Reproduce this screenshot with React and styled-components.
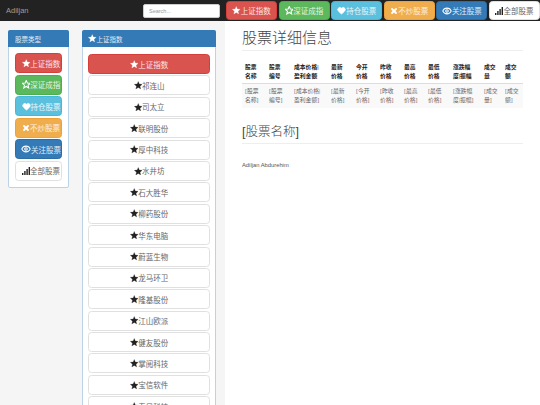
import React from "react";
import styled, { createGlobalStyle } from "styled-components";
import { Heart, X, Eye } from "lucide-react";

const GlobalStyle = createGlobalStyle`
  html, body {
    margin: 0;
    height: 405px;
    overflow: hidden;
    background: #fff;
    font-family: "Liberation Sans", "Noto Sans CJK SC", sans-serif;
    color: #333;
  }
`;

const colors = {
  red: ["#d9534f", "#d43f3a", "#fbe6e5"],
  green: ["#5cb85c", "#4cae4c", "#e6f5e6"],
  cyan: ["#5bc0de", "#46b8da", "#e6f6fb"],
  orange: ["#f0ad4e", "#eea236", "#fdf1e0"],
  blue: ["#337ab7", "#2e6da4", "#e0ebf5"],
  white: ["#fff", "#e0e0e0", "#666"],
};

function StarIcon({ empty }) {
  return (
    <svg width="8.5" height="8.5" viewBox="0 0 20 20">
      <polygon
        points="10,1 12.6,7.2 19.4,7.7 14.2,12.1 15.8,18.8 10,15.2 4.2,18.8 5.8,12.1 0.6,7.7 7.4,7.2"
        fill={empty ? "none" : "currentColor"}
        stroke="currentColor"
        strokeWidth={empty ? 2.4 : 0.5}
      />
    </svg>
  );
}

function SignalIcon() {
  return (
    <svg width="8" height="8" viewBox="0 0 8 8" fill="currentColor">
      <rect x="0" y="6" width="1.4" height="2" />
      <rect x="2.2" y="4" width="1.4" height="4" />
      <rect x="4.4" y="2" width="1.4" height="6" />
      <rect x="6.6" y="0" width="1.4" height="8" />
    </svg>
  );
}

const icons = {
  star: <StarIcon />,
  starEmpty: <StarIcon empty />,
  heart: <Heart size={9} fill="currentColor" strokeWidth={2} />,
  remove: <X size={8} strokeWidth={5.5} />,
  eye: <Eye size={10} strokeWidth={2.6} />,
  signal: <SignalIcon />,
};

const types = [
  { label: "上证指数", icon: "star", color: "red" },
  { label: "深证成指", icon: "starEmpty", color: "green" },
  { label: "持仓股票", icon: "heart", color: "cyan" },
  { label: "不炒股票", icon: "remove", color: "orange" },
  { label: "关注股票", icon: "eye", color: "blue" },
  { label: "全部股票", icon: "signal", color: "white" },
];

const stocks = [
  "祁连山", "司太立", "联明股份", "厚中科技", "水井坊", "石大胜华", "柳药股份",
  "华东电脑", "蔚蓝生物", "龙马环卫", "隆基股份", "江山欧派", "健友股份",
  "掌阅科技", "宝信软件", "春风科技",
];

const columns = [
  { w: 24, head: ["股票", "名称"], cell: ["[股票", "名称]"] },
  { w: 25, head: ["股票", "编号"], cell: ["[股票", "编号]"] },
  { w: 37, head: ["成本价格|", "盈利金额"], cell: ["[成本价格|", "盈利金额]"] },
  { w: 25, head: ["最新", "价格"], cell: ["[最新", "价格]"] },
  { w: 24, head: ["今开", "价格"], cell: ["[今开", "价格]"] },
  { w: 24, head: ["昨收", "价格"], cell: ["[昨收", "价格]"] },
  { w: 24, head: ["最高", "价格"], cell: ["[最高", "价格]"] },
  { w: 25, head: ["最低", "价格"], cell: ["[最低", "价格]"] },
  { w: 31, head: ["涨跌幅", "度|振幅"], cell: ["[涨跌幅", "度|振幅]"] },
  { w: 21, head: ["成交", "量"], cell: ["[成交", "量]"] },
  { w: 21, head: ["成交", "额"], cell: ["[成交", "额]"] },
];

const Navbar = styled.nav`
  display: flex;
  align-items: center;
  height: 21px;
  background: #222;
  padding-left: 6px;
`;

const Brand = styled.span`
  font-size: 7.5px;
  color: #9d9d9d;
  margin-right: auto;
`;

const Search = styled.input`
  box-sizing: border-box;
  width: 77px;
  height: 14px;
  margin-right: 6px;
  padding: 0 5px;
  border: 1px solid #ccc;
  border-radius: 2px;
  background: #fff;
  font: 5.5px "Liberation Sans", sans-serif;
  &::placeholder {
    color: #999;
  }
`;

const NavButtons = styled.div`
  display: flex;
  gap: 1.6px;
  width: 314px;
`;

const Button = styled.a`
  box-sizing: border-box;
  flex: ${(p) => (p.$nav ? "1 1 0" : "none")};
  display: flex;
  align-items: center;
  justify-content: center;
  height: ${(p) => (p.$nav ? "19.5px" : "20px")};
  padding-left: ${(p) => p.$shift || 0};
  background: ${(p) => colors[p.$color][0]};
  border: 1px solid ${(p) => colors[p.$color][1]};
  border-radius: 3.5px;
  color: ${(p) => colors[p.$color][2]};
  font-size: 7.5px;
  white-space: nowrap;
  svg {
    flex: none;
    color: ${(p) => (p.$color === "white" ? "#222" : "#fff")};
  }
`;

const Layout = styled.div`
  display: grid;
  grid-template-columns: 225px 1fr;
  height: 384px;
`;

const Sidebar = styled.aside`
  display: flex;
  align-items: flex-start;
  gap: 13px;
  padding: 9px 9px 0 8px;
  background: #f5f5f5;
  overflow: hidden;
`;

const Panel = styled.section`
  box-sizing: border-box;
  flex: none;
  width: ${(p) => p.$width};
  background: #fff;
  border: 1px solid #bcd2e6;
  border-radius: 2px;
`;

const PanelTitle = styled.div`
  display: flex;
  align-items: center;
  height: 17px;
  margin: -1px -1px 0;
  padding-left: ${(p) => p.$pad};
  background: #337ab7;
  border-radius: 2px 2px 0 0;
  color: #e0ebf5;
  font-size: 6.5px;
  svg {
    color: #fff;
  }
`;

const PanelBody = styled.div`
  display: flex;
  flex-direction: column;
  gap: ${(p) => p.$gap};
  padding: ${(p) => p.$padding};
`;

const Main = styled.main`
  padding: 0 17px;
`;

const Heading = styled.h1`
  margin: 0;
  padding: 7px 0 3px;
  border-bottom: 1px solid #eee;
  font-size: 15px;
  font-weight: 300;
  line-height: 19px;
  color: #444;
`;

const Table = styled.table`
  width: 281px;
  margin-top: 9px;
  border-collapse: collapse;
  table-layout: fixed;
  font-family: "Liberation Serif", "Noto Sans CJK SC", serif;
  font-size: 5.8px;
  line-height: 8.7px;
  th {
    padding: 3px;
    text-align: left;
    border-bottom: 1px solid #ddd;
    color: #222;
    white-space: nowrap;
  }
  td {
    padding: 3px;
    background: #f9f9f9;
    color: #666;
    white-space: nowrap;
  }
`;

const Col = styled.col`
  width: ${(p) => p.$w}px;
`;

const SubHeading = styled.h2`
  margin: 15px 0 0;
  padding-bottom: 2px;
  border-bottom: 1px solid #eee;
  font-size: 12.5px;
  font-weight: 300;
  line-height: 18px;
  color: #444;
`;

const Author = styled.p`
  margin: 18px 0 0;
  font-size: 5.8px;
  line-height: 7px;
  color: #555;
`;

export default function App() {
  return (
    <>
      <GlobalStyle />
      <Navbar>
        <Brand>Adiljan</Brand>
        <Search placeholder="Search..." />
        <NavButtons>
          {types.map((t) => (
            <Button key={t.label} $color={t.color} $nav>
              {icons[t.icon]}
              {t.label}
            </Button>
          ))}
        </NavButtons>
      </Navbar>
      <Layout>
        <Sidebar>
          <Panel $width="61px">
            <PanelTitle $pad="7px">股票类型</PanelTitle>
            <PanelBody $gap="1.5px" $padding="6px">
              {types.map((t) => (
                <Button key={t.label} $color={t.color} $shift="5px">
                  {icons[t.icon]}
                  {t.label}
                </Button>
              ))}
            </PanelBody>
          </Panel>
          <Panel $width="134px">
            <PanelTitle $pad="6px">
              {icons.star}
              上证指数
            </PanelTitle>
            <PanelBody $gap="1.4px" $padding="7px 5px">
              <Button $color="red">
                {icons.star}
                上证指数
              </Button>
              {stocks.map((name) => (
                <Button key={name} $color="white">
                  {icons.star}
                  {name}
                </Button>
              ))}
            </PanelBody>
          </Panel>
        </Sidebar>
        <Main>
          <Heading>股票详细信息</Heading>
          <Table>
            <colgroup>
              {columns.map((c, i) => (
                <Col key={i} $w={c.w} />
              ))}
            </colgroup>
            <thead>
              <tr>
                {columns.map((c, i) => (
                  <th key={i}>
                    {c.head[0]}
                    <br />
                    {c.head[1]}
                  </th>
                ))}
              </tr>
            </thead>
            <tbody>
              <tr>
                {columns.map((c, i) => (
                  <td key={i}>
                    {c.cell[0]}
                    <br />
                    {c.cell[1]}
                  </td>
                ))}
              </tr>
            </tbody>
          </Table>
          <SubHeading>[股票名称]</SubHeading>
          <Author>Adiljan Abdurehim</Author>
        </Main>
      </Layout>
    </>
  );
}
